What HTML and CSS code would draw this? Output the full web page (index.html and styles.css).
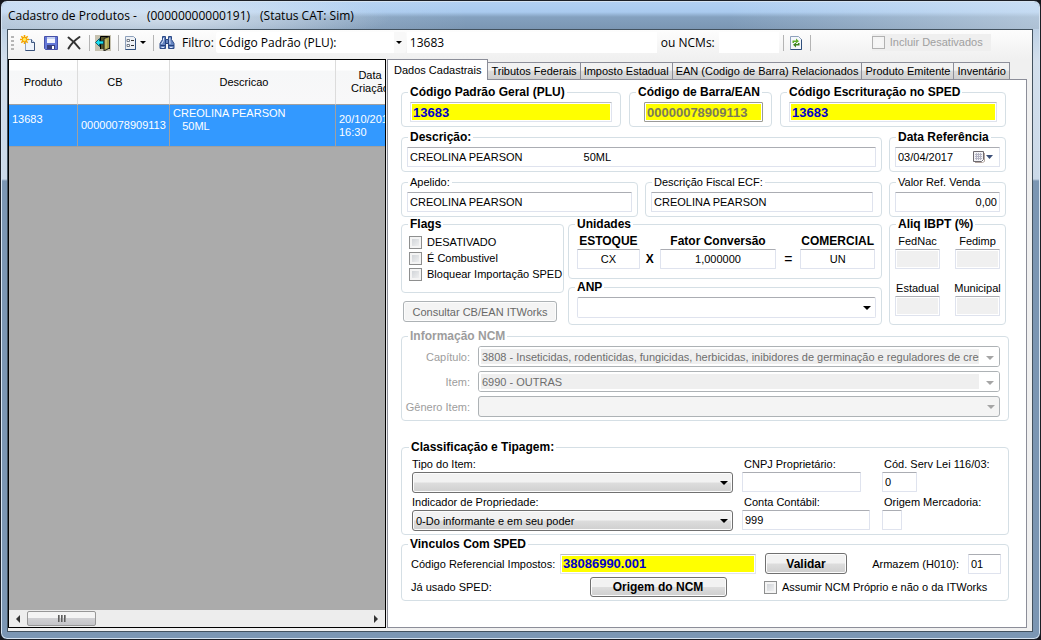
FILE: index.html
```html
<!DOCTYPE html>
<html lang="pt-BR">
<head>
  <meta charset="UTF-8"/>
  <meta name="viewport" content="width=device-width, initial-scale=1.0"/>
  <title>Cadastro de Produtos</title>
  <link rel="stylesheet" href="styles.css">
</head>
<body>

<div class="window">
  <header class="titlebar">
    <h1><span>Cadastro de Produtos -</span><span>(00000000000191)</span><span>(Status CAT: Sim)</span></h1>
  </header>

  <div class="client">
    <!-- Barra de ferramentas -->
    <div class="toolbar">
      <span class="grip"></span>
      <button class="tool" aria-label="Novo">
        <svg width="16" height="16" viewBox="0 0 16 16">
          <path d="M5.500 4.500h6l3 3v8h-9z" fill="#eef3fb" stroke="#8ea3c4"/>
          <path d="M11.500 4.500v3h3" fill="#c9d8ee" stroke="#3f5880"/>
          <path d="M14.500 7.500v8h-9" fill="none" stroke="#3a527a"/>
          <path d="M4.500 0v9M0 4.500h9M1.300 1.300l6.400 6.400M7.700 1.300l-6.400 6.400" stroke="#f5a800" stroke-width="1.600"/>
          <circle cx="4.500" cy="4.500" r="2.200" fill="#ffee55" stroke="#f59a00"/>
        </svg>
      </button>
      <button class="tool" aria-label="Salvar">
        <svg width="16" height="16" viewBox="0 0 16 16">
          <path d="M1.500 1.500h13v13h-12l-1-1z" fill="#6478d8" stroke="#4650a8"/>
          <path d="M4 2h8v6H4z" fill="#f1f4fd"/>
          <path d="M4 2h8v2H4z" fill="#c4d0f2"/>
          <path d="M4 10h8v4H4z" fill="#39407e"/>
          <path d="M9 11h2v3H9z" fill="#fff"/>
        </svg>
      </button>
      <button class="tool" aria-label="Excluir">
        <svg width="16" height="16" viewBox="0 0 16 16">
          <path d="M2.500 2.500C6 5 10 9 13.500 13.500M13.500 2C9 5 5 9 2.500 13.500" fill="none" stroke="#333" stroke-width="2" stroke-linecap="round"/>
        </svg>
      </button>
      <span class="sep"></span>
      <button class="tool" aria-label="Sair">
        <svg width="16" height="16" viewBox="0 0 16 16">
          <path d="M0 0h16v16H0z" fill="#c6c2b0"/>
          <path d="M5.500 14V1.500h9V14" fill="#55552a" stroke="#000"/>
          <path d="M9 3.500l5.500-2V13l-5.500 3z" fill="#a8a04a" stroke="#222"/>
          <path d="M11 4.500v9" stroke="#dcd68a"/>
          <path d="M0.500 7.500l4-4v2.500h4v3h-4v2.500z" fill="#19e0f0" stroke="#003c50" stroke-width=".8"/>
        </svg>
      </button>
      <span class="sep"></span>
      <button class="tool drop" aria-label="Opções">
        <svg width="13" height="16" viewBox="0 0 13 16">
          <path d="M1.500 1.500h8l2 2v11h-10z" fill="#eef1f5" stroke="#8da0bb"/>
          <path d="M11.500 3.500v11h-10" fill="none" stroke="#2f4f7c"/>
          <path d="M3 4.500h2.500v2H3zM3 9.500h2.500v2H3z" fill="#fff" stroke="#55606e" stroke-width=".8"/>
          <path d="M7 5.500h3M7 10.500h3" stroke="#333"/>
        </svg>
        <i class="arrow"></i>
      </button>
      <span class="sep"></span>
      <button class="tool" aria-label="Localizar">
        <svg width="16" height="16" viewBox="0 0 16 16">
          <path d="M3.500 1.500h3v3h3v-3h3v3l2.500 4v5H9.500v-5h-3v5H1v-5l2.500-4z" fill="#6484c0" stroke="#2d4b88"/>
          <path d="M6.500 4.500v4h3v-4M1.500 10.500h5M9.500 10.500H15" fill="none" stroke="#24407c"/>
          <path d="M4.500 3v2.500L2.500 9M10.800 3v2.500L11 9M2.500 12.500h2.500M11 12.500h2.500" fill="none" stroke="#dce6fa"/>
        </svg>
      </button>
      <label for="filtro">Filtro:</label>
      <span class="combo filtro">
        <select id="filtro"><option>Código Padrão (PLU):</option></select>
      </span>
      <input class="busca" id="busca" value="13683" aria-label="Buscar"/>
      <label for="ncms">ou NCMs:</label>
      <input class="ncms" id="ncms"/>
      <span class="sep"></span>
      <button class="tool" aria-label="Atualizar">
        <svg width="14" height="16" viewBox="-1 0 14 16">
          <path d="M.5 1.500h8l3 3v10H.5z" fill="#f4f7fb" stroke="#8da0bb"/>
          <path d="M11.500 4.500v10H.5" fill="none" stroke="#2f4f7c"/>
          <path d="M2.500 8V5.500H6V3.500L9 6.200 6 8.500V7H4v1z" fill="#5fae2c"/>
          <path d="M9.500 8v2.500H6v2L3 9.800 6 7.500V9h2V8z" fill="#3d8420"/>
        </svg>
      </button>
      <span class="sep"></span>
      <label class="check incluir"><input type="checkbox" disabled/>Incluir Desativados</label>
    </div>

    <div class="panes">
      <!-- Lista de produtos -->
      <section class="lista">
        <div class="lista-body">
          <table>
            <colgroup><col class="c-prod"/><col class="c-cb"/><col class="c-desc"/><col class="c-data"/></colgroup>
            <thead>
              <tr><th>Produto</th><th>CB</th><th>Descricao</th><th>Data<br/>Criação</th></tr>
            </thead>
            <tbody>
              <tr>
                <td class="top">13683</td>
                <td>00000078909113</td>
                <td class="top">CREOLINA PEARSON<br/>   50ML</td>
                <td>20/10/2016<br/>16:30</td>
              </tr>
            </tbody>
          </table>
        </div>
        <div class="scroll">
          <button class="scroll-btn" aria-label="Rolar para a esquerda"><i class="tri-left"></i></button>
          <span class="thumb"><i></i><i></i><i></i></span>
          <button class="scroll-btn" aria-label="Rolar para a direita"><i class="tri-right"></i></button>
        </div>
      </section>

      <!-- Ficha do produto -->
      <section class="ficha">
        <nav class="tabs">
          <button class="tab active">Dados Cadastrais</button>
          <button class="tab">Tributos Federais</button>
          <button class="tab">Imposto Estadual</button>
          <button class="tab">EAN (Codigo de Barra) Relacionados</button>
          <button class="tab">Produto Emitente</button>
          <button class="tab">Inventário</button>
        </nav>

        <form class="page">
          <div class="row codigos">
            <fieldset>
              <legend><label for="plu">Código Padrão Geral (PLU)</label></legend>
              <input class="key" id="plu" value="13683"/>
            </fieldset>
            <fieldset class="cb">
              <legend><label for="ean">Código de Barra/EAN</label></legend>
              <input class="key" id="ean" value="00000078909113" disabled/>
            </fieldset>
            <fieldset>
              <legend><label for="sped">Código Escrituração no SPED</label></legend>
              <input class="key" id="sped" value="13683"/>
            </fieldset>
          </div>

          <div class="row descricao">
            <fieldset>
              <legend><label for="desc">Descrição:</label></legend>
              <input id="desc" value="CREOLINA PEARSON                    50ML"/>
            </fieldset>
            <fieldset class="side">
              <legend><label for="data">Data Referência</label></legend>
              <div class="date">
                <input id="data" value="03/04/2017"/>
                <button type="button" aria-label="Abrir calendário">
                  <svg width="21" height="14" viewBox="0 0 21 14">
                    <path d="M.5 1.500h10v8l-2 2h-8z" fill="#f2f2f5" stroke="#6e6a70"/>
                    <path d="M2 4.500h7M2 6.500h7M2 8.500h7M3.500 3v7M5.500 3v7M7.500 3v7" stroke="#b4b4c4"/>
                    <path d="M11.500 3v8.500l-2 1H2" fill="none" stroke="#b5a7a2"/>
                    <path d="M13 5h7l-3.500 4z" fill="#3c4f78"/>
                  </svg>
                </button>
              </div>
            </fieldset>
          </div>

          <div class="row apelido">
            <fieldset class="plain">
              <legend><label for="apelido">Apelido:</label></legend>
              <input id="apelido" value="CREOLINA PEARSON"/>
            </fieldset>
            <fieldset class="plain ecf">
              <legend><label for="ecf">Descrição Fiscal ECF:</label></legend>
              <input id="ecf" value="CREOLINA PEARSON"/>
            </fieldset>
            <fieldset class="plain side">
              <legend><label for="valor">Valor Ref. Venda</label></legend>
              <input class="num" id="valor" value="0,00"/>
            </fieldset>
          </div>

          <div class="row detalhes">
            <div class="col">
              <fieldset class="flags">
                <legend>Flags</legend>
                <label class="check"><input type="checkbox"/>DESATIVADO</label>
                <label class="check"><input type="checkbox"/>É Combustivel</label>
                <label class="check"><input type="checkbox"/>Bloquear Importação SPED</label>
              </fieldset>
              <button type="button" class="btn consultar" disabled>Consultar CB/EAN ITWorks</button>
            </div>
            <div class="col">
              <fieldset>
                <legend>Unidades</legend>
                <div class="unidades">
                  <label for="estoque">ESTOQUE</label>
                  <label for="fator" class="c3">Fator Conversão</label>
                  <label for="comercial" class="c5">COMERCIAL</label>
                  <input id="estoque" value="CX"/>
                  <b>X</b>
                  <input id="fator" value="1,000000"/>
                  <span>=</span>
                  <input id="comercial" value="UN"/>
                </div>
              </fieldset>
              <fieldset class="anp">
                <legend><label for="anp">ANP</label></legend>
                <span class="combo">
                  <select id="anp"><option></option></select>
                </span>
              </fieldset>
            </div>
            <fieldset class="side">
              <legend>Aliq IBPT (%)</legend>
              <div class="aliq">
                <label>FedNac<input disabled/></label>
                <label>Fedimp<input disabled/></label>
                <label>Estadual<input disabled/></label>
                <label>Municipal<input disabled/></label>
              </div>
            </fieldset>
          </div>

          <fieldset class="ncm" disabled>
            <legend>Informação NCM</legend>
            <div class="ncm-grid">
              <label for="capitulo">Capítulo:</label>
              <span class="combo edit"><select id="capitulo"><option>3808 - Inseticidas, rodenticidas, fungicidas, herbicidas, inibidores de germinação e reguladores de crescimento</option></select></span>
              <label for="item">Item:</label>
              <span class="combo edit"><select id="item"><option>6990 - OUTRAS</option></select></span>
              <label for="genero">Gênero Item:</label>
              <span class="combo"><select id="genero"><option></option></select></span>
            </div>
          </fieldset>

          <fieldset class="classif">
            <legend>Classificação e Tipagem:</legend>
            <div class="classif-grid">
              <div class="field">
                <label for="tipo">Tipo do Item:</label>
                <span class="combo list"><select id="tipo"><option></option></select></span>
              </div>
              <div class="field">
                <label for="cnpj">CNPJ Proprietário:</label>
                <input class="w-cnpj" id="cnpj"/>
              </div>
              <div class="field">
                <label for="lei">Cód. Serv Lei 116/03:</label>
                <input class="w-lei" id="lei" value="0"/>
              </div>
              <div class="field">
                <label for="indicador">Indicador de Propriedade:</label>
                <span class="combo list"><select id="indicador"><option>0-Do informante e em seu poder</option></select></span>
              </div>
              <div class="field">
                <label for="conta">Conta Contábil:</label>
                <input class="w-conta" id="conta" value="999"/>
              </div>
              <div class="field">
                <label for="origem">Origem Mercadoria:</label>
                <input class="w-origem" id="origem"/>
              </div>
            </div>
          </fieldset>

          <fieldset class="vinculos">
            <legend>Vinculos Com SPED</legend>
            <div class="vinc-grid">
              <label for="ref">Código Referencial Impostos:</label>
              <input class="key" id="ref" value="38086990.001"/>
              <div class="validar">
                <button type="button" class="btn strong">Validar</button>
                <label for="armazem">Armazem (H010):</label>
                <input id="armazem" value="01"/>
              </div>
              <span>Já usado SPED:</span>
              <button type="button" class="btn strong origem">Origem do NCM</button>
              <label class="check"><input type="checkbox"/>Assumir NCM Próprio e não o da ITWorks</label>
            </div>
          </fieldset>
        </form>
      </section>
    </div>
  </div>
</div>

</body>
</html>
```
FILE: styles.css
```css
*,*::before,*::after{box-sizing:border-box;margin:0;padding:0;}
body{background:#15171c;color:#000;font:11px/14px "Liberation Sans",Arial,sans-serif;}
button,input,select{font:inherit;color:inherit;border-radius:0;}
label,legend,span{white-space:nowrap;}

/* Moldura da janela */
.window{display:flex;flex-direction:column;min-height:100vh;padding:0 7px 7px 6px;border:1px solid #1c1f26;border-radius:7px;background:linear-gradient(#a9c3de 0,#d3dfec 60px,#cbd9e8 178px,#7b96b3 180px);box-shadow:inset 0 0 0 1px #d5e3f1;}
.titlebar{height:27px;margin:1px -6px 0 -5px;padding:0 6px;border-radius:6px 6px 0 0;background:radial-gradient(ellipse 220px 26px at 170px 16px,rgba(225,234,244,.75),rgba(225,234,244,0)),linear-gradient(90deg,rgba(225,236,246,.5) 0,rgba(225,236,246,0) 45%,rgba(225,236,246,0) 70%,rgba(225,236,246,.5) 100%),linear-gradient(#b2d0f2 0,#a9caee 10px,#84a1bf 15px,#7b96b3 100%);}
.titlebar h1{display:flex;gap:10px;font:12px/27px "Open Sans","Segoe UI",sans-serif;}
.client{flex:1;display:flex;flex-direction:column;border:1px solid #43525f;background:#f0f0f0;}

/* Barra de ferramentas */
.toolbar{display:flex;align-items:center;height:29px;padding:0 0 4px 3px;font:12px/16px "Open Sans","Segoe UI",sans-serif;background:linear-gradient(#fdfdfd,#f0f0f0);}
.toolbar > *{flex:none;}
.grip{width:3px;height:14px;margin-right:2px;background:repeating-linear-gradient(#b5b5b5 0 2px,transparent 2px 4px);}
.tool{display:flex;align-items:center;justify-content:center;height:22px;padding:0 3px 0 4px;border:0;background:none;}
.tool.drop{gap:3px;}
.arrow{width:0;height:0;border:3px solid transparent;border-top-color:#000;border-bottom:0;}
.sep{width:1px;height:16px;margin:0 1px 0 4px;background:#b4b4b4;}
.toolbar label{padding:0 4px;}
.toolbar label[for=filtro]{padding:0 2px 0 4px;}
.toolbar input:not([type]){height:21px;padding:0 3px;border:0;background:#fff;}
.filtro{width:190px;}
.toolbar .busca{width:250px;margin-left:1px;}
.toolbar .ncms{width:60px;}
.toolbar .incluir{height:17px;margin-left:60px;padding:0 8px 0 0;font:11px/17px "Liberation Sans",Arial,sans-serif;color:#a0a0a0;background:#efefef;}

.panes{flex:1;display:flex;gap:1px;padding-bottom:3px;}

/* Lista */
.lista{flex:0 0 378px;min-width:0;display:flex;flex-direction:column;border:1px solid #000;background:#ababab;}
.lista-body{flex:1;overflow:hidden;}
.lista table{width:420px;table-layout:fixed;border-collapse:separate;border-spacing:0;}
.c-prod{width:69px;}
.c-cb{width:92px;}
.c-desc{width:166px;}
.lista th{height:45px;padding-right:17px;border-right:1px solid #dcdcdc;border-bottom:1px solid #a0a0a0;background:linear-gradient(#fff 0 10px,#f6f7f8 11px,#f8f8f9);font-weight:normal;line-height:13px;}
.lista th:first-child{padding-right:0;}
.lista th:last-child{padding-right:24px;}
.lista td{height:42px;padding:0 3px;border-right:1px solid #a0a0a0;border-bottom:1px solid #a0a0a0;background:#3399ff;color:#fff;line-height:13px;white-space:pre;}
.lista td.top{padding-bottom:12px;}
.scroll{display:flex;align-items:center;height:17px;background:#ededed;}
.scroll-btn{width:18px;height:17px;border:0;background:none;}
.scroll-btn:last-child{margin-left:auto;}
.scroll i{display:inline-block;}
.tri-left,.tri-right{border:4px solid transparent;border-width:4px 0;}
.tri-left{border-right:4px solid #333;}
.tri-right{border-left:4px solid #333;}
.thumb{display:flex;align-items:center;justify-content:center;gap:1px;width:69px;height:15px;border:1px solid #979797;border-radius:2px;background:linear-gradient(#f4f4f4 45%,#d0d0d3 50%,#c4c4c8);}
.thumb i{width:2px;height:7px;background:linear-gradient(90deg,#444,#aaa);}

/* Abas */
.ficha{flex:1;min-width:0;display:flex;flex-direction:column;margin-right:5px;}
.tabs{display:flex;align-items:flex-end;height:20px;}
.tab{height:17px;padding:0 3px;border:1px solid #8c8e99;border-left-width:0;border-bottom:0;background:linear-gradient(#f2f2f2 45%,#dcdcdc 50%,#cfcfcf);white-space:nowrap;}
.tab.active{position:relative;height:21px;margin-bottom:-1px;padding:0 6px;border-left-width:1px;background:#fff;}
.page{flex:1;padding:5px 17px 6px 13px;border:1px solid #8c8e99;background:#fff;}

/* Grupos */
fieldset{min-width:0;padding:3px 5px 4px;border:1px solid #d5dfe5;border-radius:4px;}
legend{margin-left:1px;padding:0 2px;font-weight:bold;font-size:12px;line-height:14px;}
.plain legend{font-weight:normal;font-size:11px;}
fieldset input:not([type]){display:block;width:100%;height:20px;padding:0 2px;border:1px solid #dfe3ee;border-top-color:#abadb3;border-radius:1px;background:#fff;}
fieldset input:not([type]):disabled{background:#f0f0f0;box-shadow:inset 0 0 0 1px #fff;}
fieldset input.key:not([type]){border-color:#b9bcc4 #dfe3ee #dfe3ee;background:#ff0;box-shadow:inset 0 0 0 1px #fff;font-weight:bold;font-size:13px;color:#0000cd;}
fieldset input.key:not([type]):disabled{border-color:#9a9a9a;background:#ff0;color:#7a7a5a;}
fieldset input.num{text-align:right;}
.row{display:grid;margin-right:3px;margin-bottom:3px;}
.codigos{grid-template-columns:220fr 143fr 226fr;gap:8px;}
.codigos fieldset:not(.cb) input:not([type]){width:calc(100% - 6px);margin-left:3px;}
.codigos .cb{padding-right:8px;}
.codigos .cb input:not([type]){width:calc(100% - 9px);margin-left:9px;}
.descricao{grid-template-columns:1fr 117px;gap:7px;}
.apelido{grid-template-columns:1fr 1fr 117px;gap:7px;margin-bottom:0;}
.ecf input{max-width:222px;}
.detalhes{grid-template-columns:163px 1fr 117px;gap:4px;margin-bottom:4px;}
.detalhes .side{margin-left:3px;width:117px;}
.detalhes{grid-template-columns:163px 1fr 120px;}
.col{display:flex;flex-direction:column;}
.date{display:flex;height:20px;border:1px solid #dfe3ee;border-top-color:#abadb3;}
.date input:not([type]){flex:1;height:18px;border:0;}
.date button{display:flex;align-items:center;padding-right:5px;border:0;background:none;}

.check{display:flex;align-items:center;gap:5px;height:16px;}
input[type=checkbox]{flex:none;appearance:none;width:13px;height:13px;border:1px solid #8e8f8f;background:linear-gradient(135deg,#c9cdd2,#f6f6f6);box-shadow:inset 0 0 0 2px #f4f4f4;}
input[type=checkbox]:disabled{border-color:#b1b1b1;background:#f6f6f6;}
.flags{height:76px;padding:3px 0 0 7px;}
.btn{height:21px;border:1px solid #707070;border-radius:3px;background:linear-gradient(#f2f2f2 48%,#dddddd 52%,#cfcfcf);box-shadow:inset 0 0 0 1px #fcfcfc;white-space:nowrap;}
.btn:disabled{border-color:#adb2b5;background:#f4f4f4;color:#686868;}
.btn.strong{font-weight:bold;font-size:12px;}
.consultar{width:154px;margin:8px 0 0 2px;}
.flags legend{margin-left:-1px;}

.unidades{display:grid;grid-template-columns:63fr 20px 117fr 24px 75fr;align-items:center;justify-items:center;padding:0 1px 5px 3px;}
.unidades label,.unidades b{font-weight:bold;font-size:12px;line-height:15px;}
.unidades .c3{grid-column:3;}
.unidades .c5{grid-column:5;}
.unidades span{font-size:14px;}
.unidades input:not([type]){text-align:center;}
.anp{margin-top:1px;padding-bottom:6px;}
.anp .combo{margin-left:3px;}
.aliq{display:grid;grid-template-columns:45px 45px;justify-content:space-between;row-gap:12px;}
.aliq label{display:flex;flex-direction:column;align-items:center;line-height:15px;}

/* Combos */
.combo{display:block;position:relative;}
.combo::after{content:"";position:absolute;right:5px;top:9px;border:4px solid transparent;border-top-color:#000;border-bottom:0;pointer-events:none;}
.combo.filtro::after{right:4px;border-width:3px 3px 0;}
.combo select{appearance:none;display:block;width:100%;height:21px;padding:0 20px 0 3px;border:1px solid #dfe3ee;border-top-color:#abadb3;border-radius:2px;background:#fff;}
.combo.filtro select{border:0;background:linear-gradient(90deg,#fff calc(100% - 12px),#f8f8f8 0);}
.combo.list select{border-color:#707070;border-radius:3px;background:linear-gradient(#f2f2f2 48%,#dddddd 52%,#cfcfcf);box-shadow:inset 0 0 0 1px #fcfcfc;}

.ncm{color:#9d9d9d;padding-bottom:3px;}
.ncm-grid{display:grid;grid-template-columns:63px 1fr;align-items:center;gap:4px 8px;padding-right:3px;}
.ncm-grid label{justify-self:end;}
.ncm .combo select{border-color:#adb2b5;border-radius:3px;background:#f4f4f4;color:#6d6d6d;opacity:1;}
.ncm .combo.edit{border:1px solid #adb2b5;border-radius:3px;background:#fff;}
.ncm .combo.edit select{height:19px;border:2px solid #fff;border-right-width:20px;padding:0 0 0 1px;border-radius:2px;background:#efefef;}
.ncm .combo::after{border-top-color:#a5a5a5;}

.classif{margin-top:19px;padding:3px 7px 3px 10px;}
.classif legend,.vinculos legend{margin-left:-3px;}
.classif-grid{display:grid;grid-template-columns:1fr 131px 119px;gap:2px 9px;}
.field label{display:block;line-height:15px;padding-left:2px;}
.field:nth-child(3n+1) label{padding-left:0;}
fieldset .w-cnpj:not([type]){width:119px;}
fieldset .w-conta:not([type]){width:128px;}
fieldset .w-lei:not([type]){width:35px;}
fieldset .w-origem:not([type]){width:20px;}

.vinculos{margin-top:2px;padding:2px 7px 3px 9px;}
.vinc-grid{display:grid;grid-template-columns:149px 1fr 245px;align-items:center;row-gap:3px;}
.validar{display:flex;align-items:center;margin-left:9px;}
.validar .btn{width:82px;}
.validar label{margin-left:auto;padding-right:9px;}
.validar input:not([type]){width:33px;}
.origem{width:137px;height:20px;justify-self:center;}
.vinc-grid .check{margin-left:8px;}
```
